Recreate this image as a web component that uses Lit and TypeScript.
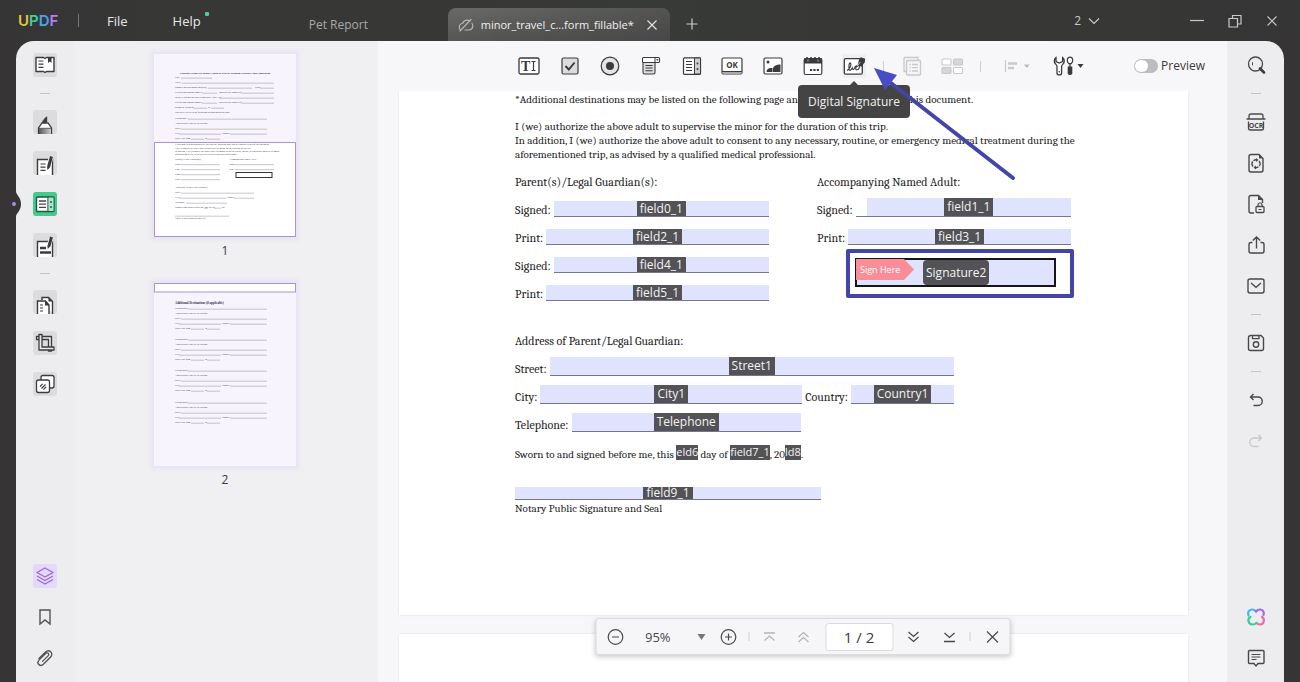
import { LitElement, html, css, svg, nothing, TemplateResult } from "lit";
import { customElement, property } from "lit/decorators.js";
import { classMap } from "lit/directives/class-map.js";

type Glyph = [number, number, TemplateResult];

const D = "#3c3a3c";
const G = "#c9c8cb";

const icons: Record<string, Glyph> = {
  // form toolbar
  text: [24, 24, svg`<rect x="2" y="4" width="20" height="16" rx="1.5" fill="#fff" stroke=${D} stroke-width="1.3"/>
    <text x="4" y="17" font-family="Liberation Serif, serif" font-weight="700" font-size="14" fill=${D}>T</text>
    <path d="M14.5 7.5h4M14.5 16.5h4M16.5 7.5v9" stroke=${D} stroke-width="1.2" fill="none"/>`],
  check: [24, 24, svg`<rect x="4" y="4" width="16" height="16" rx="1.5" fill="#dcdbde" stroke=${D} stroke-width="1.2"/>
    <path d="M7.5 12l3.3 3.5 5.8-7" fill="none" stroke=${D} stroke-width="1.9"/>`],
  radio: [24, 24, svg`<circle cx="12" cy="12" r="8.8" fill="#e4e3e5" stroke=${D} stroke-width="1.2"/><circle cx="12" cy="12" r="4" fill=${D}/>`],
  dropdown: [24, 24, svg`<path d="M4 8.500h12v10a1.500 1.500 0 0 1-1.500 1.500h-9a1.500 1.500 0 0 1-1.500-1.500z" fill="#dcdbde" stroke=${D} stroke-width="1.1"/>
    <rect x="3.500" y="3.500" width="17" height="5" rx="1" fill="#fff" stroke=${D} stroke-width="1.1"/><path d="M16 4v4.500" stroke=${D}/><path d="M17 5.300h2.600l-1.300 1.700z" fill=${D}/>
    <path d="M6.500 11.500h7M6.500 14h7M6.500 16.700h7" stroke=${D} stroke-width="1.1"/>`],
  list: [24, 24, svg`<rect x="3.500" y="3.800" width="17" height="16.500" rx="1" fill="#fff" stroke=${D} stroke-width="1.2"/><path d="M14.500 4h6v16h-6z" fill="#cfced1" stroke=${D} stroke-width="1"/>
    <path d="M6 7.500h6M6 10.500h6M6 13.500h6M6 16.500h6" stroke=${D} stroke-width="1.1"/><circle cx="17.500" cy="9.500" r="1" fill=${D}/><circle cx="17.500" cy="15" r="1" fill=${D}/>`],
  ok: [24, 24, svg`<rect x="2" y="4" width="20" height="16" rx="1.500" fill="#fff" stroke=${D} stroke-width="1.200"/><path d="M2.500 17.500h19v1.500q0 1-1 1h-17q-1 0-1-1z" fill="#a9a8aa"/><path d="M2 17.500h20" stroke=${D} stroke-width="1"/>
    <text x="12" y="14" text-anchor="middle" font-family="Open Sans, sans-serif" font-weight="700" font-size="8" fill=${D}>OK</text>`],
  image: [24, 24, svg`<rect x="3" y="4" width="18" height="16" rx="1.500" fill="#fff" stroke=${D} stroke-width="1.200"/><circle cx="7" cy="8" r="1.500" fill=${D}/>
    <path d="M5.500 18c0-3 2.500-4.500 6-4v4zM12 18v-4c1-2.500 4-3.800 7.500-3.500V18z" fill=${D}/>`],
  date: [24, 24, svg`<rect x="3.200" y="4.500" width="17.600" height="16" rx="1.500" fill="#fff" stroke=${D} stroke-width="1.200"/><path d="M3 4.500h18v5H3z" fill=${D}/><path d="M6 3v3M10 3v3M14 3v3M18 3v3" stroke=${D} stroke-width="1.600"/>
    <path d="M7 5.500v2M17 5.500v2" stroke="#fff" stroke-width=".6"/><path d="M9 16h2.200M12.400 16h2.200M15.800 16H18" stroke=${D} stroke-width="2.200"/>`],
  sign: [24, 24, svg`<rect x="2.300" y="4.600" width="18" height="15.600" rx="1.500" fill="#fff" stroke=${D} stroke-width="1.300"/>
    <path d="M5 16.500c2.500-1 4.800-5.500 3.600-7.600-1.600-.6-2.200 4.200-1.400 6.600.6 1.600 2.300.2 3-1.600.5 2.400 1.500 2 2.200.3.600-2 2-3 2.900-1.700-1.700 0-2.600 4 .1 3.300 1.900-.5 2.600-3.300 1.600-5" fill="none" stroke=${D} stroke-width="1.100"/>
    <path d="M15.500 11.500l1.600-6 1.700-2.300 4.400 1.500-.5 3.600-3.200 4.500z" fill=${D}/><path d="M15.800 11.300l2.500-3.200" stroke="#fff" stroke-width=".7"/>`],
  pages: [24, 24, svg`<path d="M4 3.500h14v4M4 3.500v14h3" fill="none" stroke=${G} stroke-width="1.300"/><rect x="6.500" y="6.500" width="14" height="14.500" rx="1" fill="#f6f5f7" stroke=${G} stroke-width="1.400"/>
    <path d="M9.500 10.500h1.200M12 10.500h6M9.500 13.700h1.200M12 13.700h6M9.500 17h1.200M12 17h6" stroke=${G} stroke-width="1.300"/>`],
  tiles: [24, 24, svg`<g stroke=${G} stroke-width="1.100"><rect x="2" y="5" width="9" height="6" rx="1" fill="#fff"/><rect x="13.500" y="5" width="9" height="6" rx="1" fill="#d6d5d8"/><rect x="2" y="13.500" width="9" height="6" rx="1" fill="#d6d5d8"/><rect x="13.500" y="13.500" width="9" height="6" rx="1" fill="#fff"/></g>`],
  align: [26, 24, svg`<path d="M1.500 6v12" stroke=${G} stroke-width="1.200"/><path d="M4 9.500h9M4 14h6" stroke=${G} stroke-width="2.400"/><path d="M20 10.500h5.500L22.800 14z" fill="#b9b8bb"/>`],
  tools: [32, 24, svg`<path d="M3 3.500C1 5 .8 8 2.400 9.800c1 1 1.600 1.400 1.600 2.700v6.400c0 2.600 4.600 2.600 4.600 0v-6.400c0-1.300.6-1.700 1.600-2.700C11.800 8 11.600 5 9.600 3.500v4L6.300 9 3 7.500z" fill="#fff" stroke=${D} stroke-width="1.300"/><circle cx="6.300" cy="17.800" r=".8" fill=${D}/>
    <path d="M17 3.200c-3 0-3.600 4-1.300 6.500h2.600C20.600 7.200 20 3.200 17 3.200z" fill="#fff" stroke=${D} stroke-width="1.200"/><path d="M17 9.500v4" stroke=${D} stroke-width="1.300"/><path d="M14.700 12.500h4.600v7.500q-2.300 2-4.600 0z" fill=${D}/><path d="M24.500 10h6L27.500 14z" fill=${D}/>`],
  // left rail
  reader: [24, 24, svg`<path d="M3 4.500h7.500l1.500 1 1.500-1H21v14h-7.500l-1.500 1-1.500-1H3z" fill="#fff" stroke=${D} stroke-width="1.400" stroke-linejoin="round"/><path d="M5.500 8h5M5.500 11.200h5M5.500 14.400h5" stroke=${D} stroke-width="1.200"/><path d="M15 4h3.500v6l-1.700-1.400L15 10z" fill=${D}/>`],
  marker: [24, 24, svg`<defs><linearGradient id="mk"><stop offset="0" stop-color="#555"/><stop offset="1" stop-color="#ccc"/></linearGradient></defs><path d="M5.500 24v-6l3.500-5h6l3.500 5v6z" fill="#fff" stroke=${D} stroke-width="1.300"/><path d="M6 18.500h12V24H6z" fill="url(#mk)"/><path d="M5.500 18.300h13" stroke=${D} stroke-width=".8"/><path d="M8.700 12.800c1-2.500 2.800-5 5.500-6.500v6.500z" fill=${D}/>`],
  edit: [24, 24, svg`<path d="M4.500 24V8.500h15V24" fill="#fff" stroke=${D} stroke-width="1.400"/><path d="M7.500 13h5M7.500 16.200h5M7.500 19.400h5" stroke=${D} stroke-width="1.200"/><path d="M18 6.500l-2.500 9.500" stroke="#fff" stroke-width="4.500"/><path d="M18.500 5.500L15.500 16" stroke=${D} stroke-width="3"/><path d="M14 15.500l3 .8-2.500 2.700z" fill=${D}/>`],
  form: [24, 24, svg`<rect x="3.500" y="5" width="17.500" height="14.500" rx="1" fill="#fff" stroke="#1f5b43" stroke-width="1.400"/><path d="M15 5v14.500" stroke="#1f5b43" stroke-width="1.300"/><path d="M15.700 5.700h4.600v13h-4.600z" fill="#a8e8cc"/><path d="M6 9h7M6 12.200h7M6 15.400h7" stroke="#444" stroke-width="1.300"/><circle cx="18" cy="10" r="1" fill="#1f5b43"/><circle cx="18" cy="15" r="1" fill="#1f5b43"/>`],
  redact: [24, 24, svg`<path d="M4.500 24V8.500h15V24" fill="#fff" stroke=${D} stroke-width="1.400"/><path d="M7 15h6M7 19.500h11" stroke=${D} stroke-width="2.600"/><path d="M18 5.500L15.600 14" stroke="#fff" stroke-width="4.500"/><path d="M18.500 4L16 13" stroke=${D} stroke-width="3"/><path d="M14.300 12.500l3 .8-2.500 2.700z" fill=${D}/>`],
  organize: [24, 24, svg`<path d="M9 10V7.500h6.500l4 4V24" fill="#fff" stroke=${D} stroke-width="1.400"/><path d="M4.500 24V11h8l3.500 4v9" fill="#fff" stroke=${D} stroke-width="1.400"/><path d="M12 10.500v5h4.500zM15.500 7v4.500h4.500z" fill=${D}/><path d="M7 15h3M7 18h3M7 21h3" stroke=${D} stroke-width="1.200"/>`],
  crop: [24, 24, svg`<g fill="#e9e9ea" stroke=${D} stroke-width="1.300" stroke-linejoin="round"><path d="M3.500 5.500h15V20h-3V8.500h-12z"/><path d="M6 3.500h3v12.500h12v3H6z"/></g>`],
  batch: [24, 24, svg`<rect x="8" y="3.500" width="13" height="12.500" rx="2" fill="#fff" stroke=${D} stroke-width="1.300"/><rect x="3.500" y="8" width="13" height="12.500" rx="2" fill="#fff" stroke=${D} stroke-width="1.300"/><path d="M7 14.500l2.700-2.700M8.500 16.500l4-4M10.500 17.500l2.700-2.700" stroke=${D} stroke-width="1.100"/>`],
  layers: [24, 24, svg`<g fill="none" stroke="#9a68d8" stroke-width="1.300" stroke-linejoin="round"><path d="M12 4l8 4.500-8 4.500-8-4.500z"/><path d="M4 12l8 4.500 8-4.500M4 15.500L12 20l8-4.500"/></g>`],
  bookmark: [24, 24, svg`<path d="M7 5h10v14l-5-4-5 4z" fill="none" stroke="#545255" stroke-width="1.400"/>`],
  clip: [24, 24, svg`<path d="M6 12.500l6.300-6.200c1.800-1.700 3.800-2 5.400-.6 1.700 1.600 1.400 3.800-.3 5.500l-7 7.100c-1.400 1.400-3.300 1.500-4.600.2-1.200-1.200-1.100-3 .2-4.400l6.600-6.600c.9-.9 2-.9 2.700-.2.700.8.600 1.800-.2 2.600l-5.600 5.500" fill="none" stroke="#545255" stroke-width="1.300" stroke-linecap="round"/>`],
  // right rail
  search: [24, 24, svg`<circle cx="11.500" cy="11" r="7" fill="none" stroke="#4a484b" stroke-width="1.300"/><path d="M8.500 9.300v3" stroke="#4a484b"/><path d="M16 15.500l4 4" stroke=${D} stroke-width="2.600" stroke-linecap="round"/>`],
  ocr: [24, 24, svg`<g fill="none" stroke="#4a484b" stroke-width="1.300"><path d="M2.500 9h19M5 8.500V6q0-2 2-2h10q2 0 2 2v2.500M4.500 11.500V18q0 2 2 2h11q2 0 2-2v-6.500"/></g><text x="12" y="17.500" text-anchor="middle" font-family="Open Sans, sans-serif" font-weight="700" font-size="7" fill="#4a484b">OCR</text>`],
  convert: [24, 24, svg`<path d="M7 3.500h8l4 4V19q0 2-2 2H7q-2 0-2-2V5.500q0-2 2-2z" fill="none" stroke="#4a484b" stroke-width="1.400"/><path d="M15 3.500v4h4z" fill="#4a484b"/><path d="M9 15.500a4 4 0 0 1-.3-5M15 10a4 4 0 0 1 .3 5M9.500 9.700a4 4 0 0 1 3.500-.8M14.500 15.800a4 4 0 0 1-3.500.8" fill="none" stroke="#4a484b" stroke-width="1.300"/><path d="M12 7l2.500 2-2.500 2zM12 14.500L9.500 16.500 12 18.500z" fill="#4a484b"/>`],
  protect: [24, 24, svg`<path d="M10 21H7q-2 0-2-2V5.500q0-2 2-2h7.500l4 4V11" fill="none" stroke="#4a484b" stroke-width="1.400"/><path d="M14 3.500v4.500h5z" fill="#4a484b"/><rect x="12" y="14.500" width="8" height="6" rx="1" fill="#f0eff1" stroke="#4a484b" stroke-width="1.300"/><path d="M14 14.500v-1.500a2 2 0 0 1 4 0v1.500M14.500 17.500h3" fill="none" stroke="#4a484b" stroke-width="1.200"/>`],
  share: [24, 24, svg`<path d="M8.500 9.500H7q-2 0-2 2V18q0 2 2 2h11q2 0 2-2v-6.500q0-2-2-2h-1.500M12.500 15.500V4M8.800 7.500L12.500 4l3.700 3.500" fill="none" stroke="#4a484b" stroke-width="1.400"/>`],
  mail: [24, 24, svg`<rect x="4" y="5" width="16" height="14" rx="2" fill="none" stroke="#4a484b" stroke-width="1.400"/><path d="M7 9l5 4.300L17 9" fill="none" stroke="#4a484b" stroke-width="1.300"/>`],
  save: [24, 24, svg`<path d="M7 4.500h10l2.500 2.500v10.500q0 2-2 2h-11q-2 0-2-2v-11q0-2 2.500-2z" fill="none" stroke="#4a484b" stroke-width="1.400"/><path d="M8.500 5v2.700h6.500V5" fill="none" stroke="#4a484b" stroke-width="1.300"/><circle cx="12" cy="13.500" r="2.700" fill="none" stroke="#4a484b" stroke-width="1.400"/>`],
  undo: [24, 24, svg`<path d="M9.500 6L6.500 9l3 3M6.500 9h7.500a4 4 0 0 1 0 8.500H9.500" fill="none" stroke="#4a484b" stroke-width="1.400"/>`],
  redo: [24, 24, svg`<path d="M14.500 6l3 3-3 3M17.500 9H10a4 4 0 0 0 0 8.500H14.500" fill="none" stroke=${G} stroke-width="1.400"/>`],
  ai: [24, 24, svg`<g fill="none" stroke-width="2.200" stroke-linecap="round"><path d="M4.500 10.500C3.500 8 4.500 4.500 8 4.500c2 0 3 .7 4 2" stroke="#3fb6f0"/><path d="M12 6.500c1-1.300 2.500-2 4-2 3 0 4.500 3 3.500 5.500" stroke="#a06af0"/><path d="M18 12c3 1.500 2.500 7.500-2 7.500-1.500 0-2.500-.5-3.500-1.500" stroke="#f06aa8"/><path d="M12.500 18c-1 1-2 1.500-4 1.500-4.500 0-5.500-6-2-7.500" stroke="#35cf8f"/></g>`],
  comment: [24, 24, svg`<path d="M5.500 4.500h13.500q1 0 1 1v11q0 1-1 1h-5l-2 2.500-2-2.500H5.500q-1 0-1-1v-11q0-1 1-1z" fill="none" stroke="#4a484b" stroke-width="1.400"/><path d="M7.500 8.500h9M7.500 11h9M7.500 13.500h5" stroke="#4a484b" stroke-width="1.200"/>`],
  // window
  nocloud: [16, 16, svg`<g fill="none" stroke="#b5b5b5" stroke-width="1.200" stroke-linecap="round"><path d="M2 12.500C0 9 2.500 6.500 4.500 6.500 5.500 3.500 9 2 12 4M14 6.500c2 3 0 6.500-3 6.500H7M2 14L13 2.500"/></g>`],
  close: [12, 12, svg`<path d="M1.500 1.500l9 9M10.500 1.500l-9 9" stroke="currentColor" stroke-width="1.100"/>`],
  plus: [12, 12, svg`<path d="M6 .5v11M.5 6h11" stroke="currentColor" stroke-width="1.200"/>`],
  chevron: [12, 12, svg`<path d="M1 3.500l5 5 5-5" fill="none" stroke="currentColor" stroke-width="1.200"/>`],
  min: [14, 14, svg`<path d="M0 6.500h14" stroke="currentColor" stroke-width="1.200"/>`],
  restore: [14, 14, svg`<path d="M4.500 4V1.500h8.500V10h-3M1 4.500h8.500V13H1z" fill="none" stroke="currentColor" stroke-width="1.200"/>`],
  // zoom bar
  zoomOut: [18, 18, svg`<circle cx="9" cy="9" r="7.300" fill="none" stroke="#4a484b" stroke-width="1.200"/><path d="M5.500 9h7" stroke="#4a484b" stroke-width="1.200"/>`],
  zoomIn: [18, 18, svg`<circle cx="9" cy="9" r="7.300" fill="none" stroke="#4a484b" stroke-width="1.200"/><path d="M5.500 9h7M9 5.500v7" stroke="#4a484b" stroke-width="1.200"/>`],
  first: [14, 14, svg`<path d="M1.500 3h11M2 10.500L7 6l5 4.500" fill="none" stroke="#b4b3b6" stroke-width="1.300"/>`],
  prev: [14, 14, svg`<path d="M2 7l5-4.500L12 7M2 12l5-4.500 5 4.500" fill="none" stroke="#b4b3b6" stroke-width="1.300"/>`],
  next: [14, 14, svg`<path d="M2 2l5 4.500L12 2M2 7l5 4.500L12 7" fill="none" stroke="#4a484b" stroke-width="1.300"/>`],
  last: [14, 14, svg`<path d="M2 3l5 4.500L12 3M1.500 11.500h11" fill="none" stroke="#4a484b" stroke-width="1.300"/>`],
  bigClose: [14, 14, svg`<path d="M1.500 1.500l11 11M12.500 1.500l-11 11" stroke="#4a484b" stroke-width="1.200"/>`],
};

const icon = (name: string) => {
  const [w, h, body] = icons[name];
  return html`<svg width=${w} height=${h} viewBox="0 0 ${w} ${h}" aria-hidden="true">${body}</svg>`;
};

const shared = css`
  * { box-sizing: border-box; }
  svg { display: block; flex: none; }
  button {
    appearance: none; border: 0; padding: 0; margin: 0; background: none;
    font: inherit; color: inherit; display: grid; place-items: center;
  }
`;

@customElement("title-bar")
class TitleBar extends LitElement {
  static styles = [shared, css`
    :host { display: flex; height: 41px; padding: 0 16px 0 18px; color: #e8e8e8; font-size: 12px; line-height: 16px;
      background: linear-gradient(90deg, #363535, #383a37 50%, #363535); }
    .brand { display: flex; align-items: center; height: 41px; font-family: Inter, sans-serif; font-weight: 600; font-size: 15px; width: 60px; }
    .u { color: #e9c53a; } .p { color: #44cf95; } .d { color: #4aa3e8; } .f { color: #b57df0; }
    .rule { width: 1px; height: 13px; background: #777; margin-top: 14px; }
    .menu { margin: 13px 0 0 28px; height: 16px; font-size: 13px; }
    .help { margin-left: 45px; position: relative; }
    .dot { position: absolute; top: -1px; right: -8px; width: 4px; height: 4px; border-radius: 1px; background: #45cf9b; }
    .tab { margin: 8px 0 0 82px; width: 165px; height: 33px; color: #a9a9a9; place-items: center start; padding-left: 26px; }
    .current { display: flex; align-items: center; gap: 7px; margin-top: 8px; width: 222px; height: 33px; padding: 0 12px 0 10px; border-radius: 8px 8px 0 0;
      background: linear-gradient(170deg, #696b68, #555553 50%, #484647); }
    .name { flex: 1; white-space: nowrap; color: #f0f0f0; font-size: 11px; }
    .add { margin: 18px 0 0 16px; height: 12px; color: #ccc; }
    .end { margin-left: auto; display: flex; align-items: center; height: 41px; color: #c8c8c8; }
    .count { display: flex; gap: 7px; align-items: center; margin-right: 90px; }
    .win { display: flex; gap: 24px; margin-right: 6px; }
  `];
  render() {
    return html`
      <div class="brand" aria-label="UPDF"><span class="u">U</span><span class="p">P</span><span class="d">D</span><span class="f">F</span></div>
      <div class="rule"></div>
      <button class="menu">File</button>
      <button class="menu help">Help<span class="dot"></span></button>
      <button class="tab">Pet Report</button>
      <div class="current">${icon("nocloud")}<span class="name">minor_travel_c...form_fillable*</span><button aria-label="Close tab">${icon("close")}</button></div>
      <button class="add" aria-label="New tab">${icon("plus")}</button>
      <div class="end">
        <button class="count"><span>2</span>${icon("chevron")}</button>
        <div class="win">
          <button aria-label="Minimise">${icon("min")}</button>
          <button aria-label="Restore">${icon("restore")}</button>
          <button aria-label="Close">${icon("close")}</button>
        </div>
      </div>`;
  }
}

@customElement("tool-rail")
class ToolRail extends LitElement {
  @property({ attribute: false }) groups: string[][] = [];
  @property({ attribute: false }) footer: string[] = [];
  @property({ type: Boolean }) boxed = false;
  static styles = [shared, css`
    :host { display: flex; flex-direction: column; align-items: center; padding: 12px 0; }
    .group, .foot { display: flex; flex-direction: column; gap: 17px; }
    .foot { margin-top: auto; }
    .sep { width: 10px; height: 1px; background: #c4c3c6; margin: 16px 0; }
    .tool { width: 24px; height: 24px; border-radius: 3px; }
    .boxed { background: #dcdcde; }
    .active { background: #45c98f; }
    .tint { background: #e5d9fb; }
  `];
  render() {
    return html`
      ${this.groups.map((g, i) => html`
        ${i ? html`<div class="sep"></div>` : nothing}
        <div class="group">${g.map((n) => html`<button aria-label=${n} class=${classMap({ tool: true, boxed: this.boxed && n !== "form", active: n === "form" })}>${icon(n)}</button>`)}</div>`)}
      <div class="foot">${this.footer.map((n) => html`<button aria-label=${n} class=${classMap({ tool: true, tint: n === "layers" })}>${icon(n)}</button>`)}</div>`;
  }
}

// Thumbnail rows: y, then text / rule pieces as [x, text] or [x1, x2]
type Piece = [number, string] | [number, number];
const pageOne: [number, Piece[]][] = [
  [24, [[21, "Date:"], [27, 58]]],
  [29, [[21, "I (we),"], [28, 120]]],
  [34, [[21, "authorize my/our minor child(ren),"], [54, 98], [101, "Birth:"], [106, 120]]],
  [39, [[21, "US/Foreign passport number:"], [48, 63], [65, "Issued by the country of"], [87, 120]]],
  [44, [[21, "to travel with my/our supervising adult Adult TTD"], [65, 120]]],
  [49, [[21, "US/Foreign passport number:"], [48, 63], [65, "Issued by the country of"], [87, 120]]],
  [54, [[21, "during the period of"], [39, 53], [54, "to"], [57, 70]]],
  [59, [[21, "This travel will be to the following destination on this page:"]]],
  [65, [[21, "Destination 1:"], [34, 113]]],
  [70, [[21, "Address where you will be staying:"]]],
  [75, [[21, "Street:"], [27, 113]]],
  [80, [[21, "City:"], [25, 67], [68, "Country:"], [76, 113]]],
  [85, [[21, "Dates: stay from"], [37, 50], [51, "to"], [53, 66]]],
  [90.7, [[21, "*Additional destinations may be listed on the following page and are considered part of this document."]]],
  [95.3, [[21, "I (we) authorize the above adult to supervise the minor for the duration of this trip."]]],
  [98, [[21, "In addition, I (we) authorize the above adult to consent to any necessary, routine, or emergency medical treatment"]]],
  [100.6, [[21, "aforementioned trip, as advised by a qualified medical professional."]]],
  [105.5, [[21, "Parent(s)/Legal Guardian(s):"], [75, "Accompanying Named Adult:"]]],
  [110.5, [[21, "Signed:"], [28, 66], [75, "Signed:"], [82, 120]]],
  [115.5, [[21, "Print:"], [27, 66], [75, "Print:"], [81, 120]]],
  [120.5, [[21, "Signed:"], [28, 66]]],
  [125.5, [[21, "Print:"], [27, 66]]],
  [134, [[21, "Address of Parent/Legal Guardian:"]]],
  [139, [[21, "Street:"], [27, 100]]],
  [144, [[21, "City:"], [25, 72], [73, "Country:"], [80, 100]]],
  [149, [[21, "Telephone:"], [32, 73]]],
  [154, [[21, "Sworn to and signed before me, this"], [50, 54], [55, "day of"], [60, 67], [68, "20"]]],
  [162, [[21, 75]]],
  [164.5, [[21, "Notary Public Signature and Seal"]]],
];
const block = (y: number): [number, Piece[]][] => [
  [y, [[21, "Destination 2:"], [34, 113]]],
  [y + 5, [[21, "Address where you will be staying:"]]],
  [y + 10, [[21, "Street:"], [27, 113]]],
  [y + 15, [[21, "City:"], [25, 67], [68, "Country:"], [76, 113]]],
  [y + 20, [[21, "Dates: stay from"], [37, 50], [51, "to"], [53, 66]]],
];
const pageTwo = [...block(26), ...block(57), ...block(88), ...block(120)];
const sketch = (rows: [number, Piece[]][]) => rows.map(([y, ps]) => ps.map((p) =>
  typeof p[1] === "string"
    ? svg`<text x=${p[0]} y=${y} font-size="2.3">${p[1]}</text>`
    : svg`<path d="M${p[0]} ${y + 0.2}H${p[1]}" stroke="#8f8d99" stroke-width=".5"/>`));

@customElement("page-thumbs")
class PageThumbs extends LitElement {
  static styles = [shared, css`
    :host { display: flex; flex-direction: column; align-items: center; gap: 22px; padding: 13px 2px 0 0; background: #f0eff1; }
    .item { margin: 0; display: grid; justify-items: center; gap: 4px; }
    .sheet { display: block; background: #f7f4fe; box-shadow: 0 0 3px 3px #e8e4f3; }
    .sheet text { font-family: "Liberation Serif", serif; fill: #2f2d36; }
    .cap { font-size: 12px; line-height: 20px; color: #3c3a3c; }
  `];
  render() {
    return html`
      <figure class="item">
        <svg class="sheet" width="142" height="183" viewBox="0 0 142 183">
          <rect x=".5" y="88.500" width="141" height="94" fill="#fff" stroke="#ab93d6"/>
          <text x="71" y="19.500" text-anchor="middle" font-size="2.900" font-weight="700">Consent Form for Minor Child to Travel Without Parent/Legal Guardian</text>
          ${sketch(pageOne)}
          <rect x="82" y="118.500" width="36" height="5" fill="#fff" stroke="#333" stroke-width="1"/>
        </svg>
        <figcaption class="cap">1</figcaption>
      </figure>
      <figure class="item">
        <svg class="sheet" width="142" height="183" viewBox="0 0 142 183">
          <rect x=".5" y=".5" width="141" height="8.500" fill="#fff" stroke="#ab93d6"/>
          <text x="21" y="20.500" font-size="3" font-weight="700">Additional Destinations (if applicable)</text>
          ${sketch(pageTwo)}
        </svg>
        <figcaption class="cap">2</figcaption>
      </figure>`;
  }
}

@customElement("form-toolbar")
class FormToolbar extends LitElement {
  static styles = [shared, css`
    :host { display: flex; align-items: center; height: 50px; padding: 0 22px 0 139px; font-size: 12px; line-height: 16px; color: #3c3a3c; }
    .fields { display: flex; justify-content: space-between; flex: 0 0 349px; }
    .fields button, .extra button { height: 24px; }
    .anchor { position: relative; background: #efeef0; }
    .tip { position: absolute; z-index: 3; top: 31px; left: 50%; transform: translateX(-50%); width: 112px; height: 33px; line-height: 34px; text-align: center; white-space: nowrap; color: #f2f2f2; background: #454445; border-radius: 4px; }
    .tip::before { content: ""; position: absolute; top: -4px; left: 51px; border: 5px solid transparent; border-top: 0; border-bottom-color: #454445; }
    .extra { display: flex; align-items: center; gap: 16px; margin-left: 17px; }
    .bar { width: 1px; height: 11px; background: #d0cfd2; }
    .align, .tools { margin-left: 7px; }
    .preview { display: flex; align-items: center; gap: 3px; margin-left: auto; }
    .switch { appearance: none; margin: 0; width: 24px; height: 14px; border-radius: 7px; background: #bdbcbf; display: flex; align-items: center; }
    .switch::before { content: ""; width: 13px; height: 12px; margin-left: 1px; border-radius: 6px; background: #fff; }
  `];
  render() {
    return html`
      <div class="fields">
        ${["text", "check", "radio", "dropdown", "list", "ok", "image", "date"].map((n) => html`<button aria-label=${n}>${icon(n)}</button>`)}
        <button class="anchor" aria-describedby="tip">${icon("sign")}<span class="tip" id="tip" role="tooltip">Digital Signature</span></button>
      </div>
      <div class="extra">
        <span class="bar"></span>
        <button aria-label="Duplicate across pages">${icon("pages")}</button>
        <button aria-label="Multiple copies">${icon("tiles")}</button>
        <span class="bar"></span>
        <button class="align" aria-label="Align">${icon("align")}</button>
        <button class="tools" aria-label="More tools">${icon("tools")}</button>
      </div>
      <label class="preview"><input class="switch" type="checkbox" role="switch" />Preview</label>`;
  }
}

@customElement("form-page")
class FormPage extends LitElement {
  static styles = [shared, css`
    :host { display: block; background: #fff; padding: 2px 116px 99px; color: #1c1b1d;
      font-family: Cambria, Caladea, "Liberation Serif", serif; font-size: 12px; line-height: 14px; box-shadow: 0 0 2px #dddce0; }
    p { margin: 0; white-space: nowrap; }
    .small { font-size: 11px; }
    .gap { margin-top: 13px; }
    .cols { display: grid; grid-template-columns: 254px 254px; gap: 48px; margin-top: 13px; }
    .row { display: flex; align-items: flex-end; gap: 3px; height: 28px; }
    .row label { white-space: nowrap; }
    .field { display: grid; grid-template-rows: 100%; flex: 1; height: 16px; border-bottom: 1px solid #77758a; }
    .field > * { grid-area: 1 / 1; }
    .box { width: 100%; min-width: 0; height: 100%; border: 0; padding: 0; margin: 0; background: #dfe3fd; }
    .chip { justify-self: center; padding: 0 3px; background: #535256; color: #f4f4f4; font: 12px/15px "Open Sans", sans-serif; white-space: nowrap; }
    .tall { height: 19px; }
    .tall .chip { line-height: 17px; }
    .indent .box, .indent .chip { margin-left: 11px; }
    .indent .box { width: calc(100% - 11px); }
    .signature { margin: 4px -3px 0 29px; padding: 5px 14px 7px 5px; border: 4px solid #4345a8; border-radius: 2px; }
    .sigbox { display: grid; grid-template-columns: 58px 1fr; height: 29px; border: 2px solid #161616; background: #dfe3fd; width: 100%; justify-items: start; place-items: start; }
    .flag { width: 58px; height: 21px; margin: -1px 0 0 -1px; background: #fb8d99; color: #fff; font: 9px/21px "Open Sans", sans-serif; text-align: left; padding-left: 4px; clip-path: polygon(0 0, 48px 0, 58px 50%, 48px 100%, 0 100%); }
    .sigchip { margin-left: 8px; height: 25px; border-radius: 4px; background: #535256; color: #f4f4f4; font: 12px/25px "Open Sans", sans-serif; padding: 0 3px; }
    .address { width: 439px; margin-top: 33px; }
    .country { flex: 0 0 103px; }
    .phone { width: 286px; }
    .sworn { display: flex; align-items: flex-end; margin-top: 15px; height: 15px; font-size: 11px; white-space: pre; }
    .mini { display: grid; margin-bottom: 2px; }
    .mini > * { grid-area: 1 / 1; }
    .mini .box { width: 0; min-width: 100%; }
    .mini .chip { font-size: 11px; line-height: 14px; padding: 0; }
    .notary { width: 306px; height: 13px; margin-top: 25px; }
    .notary .chip { line-height: 12px; }
    .seal { margin-top: 2px; }
  `];
  field(id: string, cls = "") {
    return html`<span class="field ${cls}"><input class="box" id=${id} aria-label=${id} readonly /><span class="chip">${id}</span></span>`;
  }
  row(label: string, id: string, cls = "", rowCls = "") {
    return html`<div class="row ${rowCls}"><label for=${id}>${label}</label>${this.field(id, cls)}</div>`;
  }
  mini(id: string, shown: string) {
    return html`<span class="mini"><input class="box" size="1" aria-label=${id} readonly /><span class="chip">${shown}</span></span>`;
  }
  render() {
    return html`
      <p class="small">*Additional destinations may be listed on the following page and are considered part of this document.</p>
      <p class="small gap">I (we) authorize the above adult to supervise the minor for the duration of this trip.<br />In addition, I (we) authorize the above adult to consent to any necessary, routine, or emergency medical treatment during the<br />aforementioned trip, as advised by a qualified medical professional.</p>
      <div class="cols">
        <div>
          <p>Parent(s)/Legal Guardian(s):</p>
          ${this.row("Signed:", "field0_1")}${this.row("Print:", "field2_1")}${this.row("Signed:", "field4_1")}${this.row("Print:", "field5_1")}
        </div>
        <div>
          <p>Accompanying Named Adult:</p>
          ${this.row("Signed:", "field1_1", "tall indent")}${this.row("Print:", "field3_1")}
          <div class="signature">
            <button class="sigbox"><span class="flag">Sign Here</span><span class="sigchip">Signature2</span></button>
          </div>
        </div>
      </div>
      <div class="address">
        <p>Address of Parent/Legal Guardian:</p>
        ${this.row("Street:", "Street1", "tall")}
        <div class="row"><label for="City1">City:</label>${this.field("City1", "tall")}<label for="Country1">Country:</label>${this.field("Country1", "tall country")}</div>
        ${this.row("Telephone:", "Telephone", "tall", "phone")}
      </div>
      <div class="sworn">Sworn to and signed before me, this ${this.mini("field6_1", "eld6")} day of ${this.mini("field7_1", "field7_1")}, 20${this.mini("field8_1", "ld8")}.</div>
      ${this.field("field9_1", "notary")}
      <p class="small seal">Notary Public Signature and Seal</p>`;
  }
}

@customElement("zoom-bar")
class ZoomBar extends LitElement {
  static styles = [shared, css`
    :host { display: grid; grid-template-columns: 38px 82px 25px 15px 26px 43px 68px 40px 32px 10px 34px; align-items: center; justify-items: center;
      height: 37px; border: 1px solid #dcdbde; border-radius: 3px; background: #f6f6f8; box-shadow: 0 2px 5px rgba(0, 0, 0, 0.2); color: #4a484b; }
    .level { display: grid; align-items: center; width: 60px; }
    .level > * { grid-area: 1 / 1; }
    .pick { appearance: none; border: 0; margin: 0; padding: 0; background: none; width: 60px; font: 13px/18px "Open Sans", sans-serif; color: #4a484b; }
    .caret { justify-self: end; border: 4px solid transparent; border-top: 6px solid #77767a; border-bottom: 0; pointer-events: none; }
    .bar { width: 1px; height: 9px; background: #cfced1; }
    .page { width: 68px; height: 28px; border: 1px solid #dbdade; border-radius: 3px; background: #fff; padding: 0; text-align: center; font: 15px/20px "Open Sans", sans-serif; color: #3c3a3c; }
  `];
  render() {
    const b = (n: string, label: string) => html`<button aria-label=${label}>${icon(n)}</button>`;
    return html`
      ${b("zoomOut", "Zoom out")}
      <span class="level"><select class="pick" aria-label="Zoom level"><option>95%</option></select><span class="caret"></span></span>
      ${b("zoomIn", "Zoom in")}<span class="bar"></span>
      ${b("first", "First page")}${b("prev", "Previous page")}
      <input class="page" aria-label="Page" value="1 / 2" />
      ${b("next", "Next page")}${b("last", "Last page")}<span class="bar"></span>${b("bigClose", "Close")}`;
  }
}

@customElement("app-root")
class AppRoot extends LitElement {
  static styles = [shared, css`
    :host { display: flex; flex-direction: column; height: 100vh; overflow: hidden; background: #363435; font-family: "Open Sans", sans-serif; }
    .shell { flex: 1; min-height: 0; display: grid; grid-template-columns: 58px 304px minmax(0, 1fr) 57px; margin: 0 16px; position: relative; }
    .left { background: #edecee; border-radius: 18px 0 0 0; }
    .right { background: #edecef; border-radius: 0 18px 0 0; }
    .work { position: relative; display: flex; flex-direction: column; min-height: 0; background: #f7f6f9; }
    .canvas { flex: 1; min-height: 0; overflow: hidden; display: flex; flex-direction: column; gap: 19px; padding: 0 39px 0 21px; }
    .canvas > * { flex: none; }
    .blank { height: 200px; background: #fff; box-shadow: 0 0 2px #dddce0; }
    .zoom { position: absolute; bottom: 27px; left: 50%; transform: translateX(-50%); z-index: 2; }
    .arrow { position: absolute; top: 26px; left: 495px; z-index: 4; pointer-events: none; }
    .notch { position: absolute; left: -4px; top: 148px; }
  `];
  render() {
    return html`
      <title-bar></title-bar>
      <div class="shell">
        <tool-rail class="left" boxed
          .groups=${[["reader"], ["marker", "edit", "form", "redact"], ["organize", "crop", "batch"]]}
          .footer=${["layers", "bookmark", "clip"]}></tool-rail>
        <page-thumbs></page-thumbs>
        <main class="work">
          <form-toolbar></form-toolbar>
          <div class="canvas"><form-page></form-page><div class="blank"></div></div>
          <zoom-bar class="zoom"></zoom-bar>
          <svg class="arrow" width="144" height="114" viewBox="0 0 144 114" aria-hidden="true">
            <path d="M14 13L140 111" stroke="#4345a8" stroke-width="4" stroke-linecap="round"/><path d="M1 1L24 8 12 23z" fill="#474dc4"/>
          </svg>
        </main>
        <tool-rail class="right"
          .groups=${[["search"], ["ocr", "convert", "protect", "share", "mail"], ["save"], ["undo", "redo"]]}
          .footer=${["ai", "comment"]}></tool-rail>
        <svg class="notch" width="10" height="30" viewBox="0 0 10 30" aria-hidden="true">
          <path d="M0 2h4c0 4 5 6 5 13s-5 9-5 13H0z" fill="#363435"/><circle cx="2" cy="15" r="2" fill="#a98be0"/>
        </svg>
      </div>`;
  }
}
